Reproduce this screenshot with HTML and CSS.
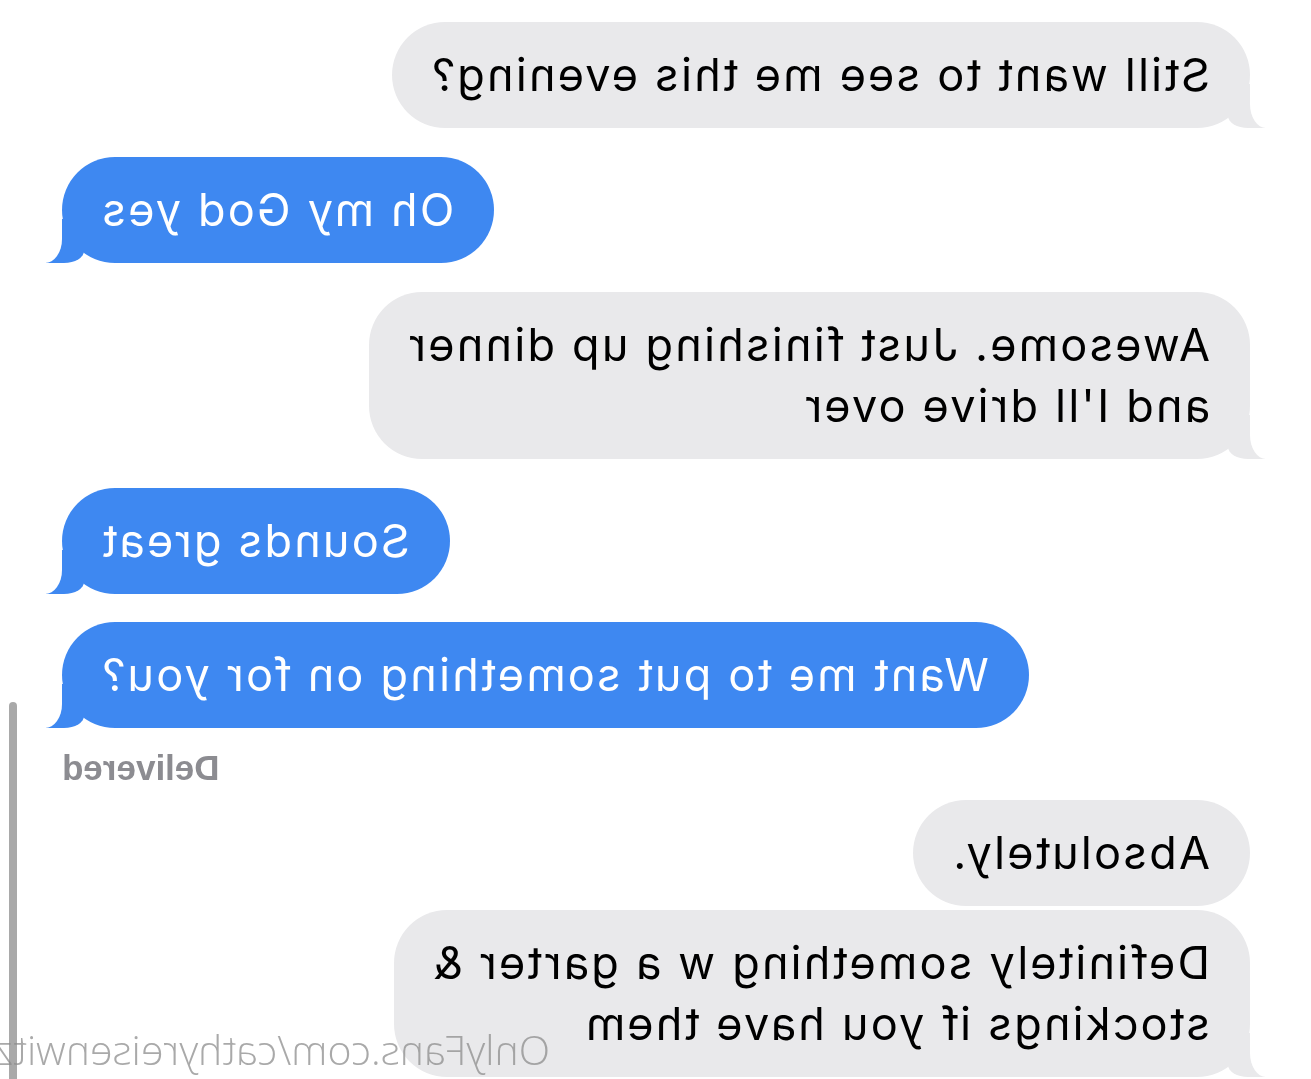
FILE: index.html
```html
<!DOCTYPE html>
<html lang="en">
  <head>
    <meta charset="UTF-8" />
    <meta name="viewport" content="width=device-width, initial-scale=1.0" />
    <title>Messages</title>
    <link rel="stylesheet" href="styles.css">
  </head>
  <body>
    <!-- the whole capture is shown mirrored, so the thread is laid out normally and flipped -->
    <div class="screen">
      <div class="thread">
        <div class="bubble them tail">Still want to see me this evening?</div>
        <div class="bubble me tail">Oh my God yes</div>
        <div class="bubble them tail">Awesome. Just finishing up dinner<br>and I'll drive over</div>
        <div class="bubble me tail">Sounds great</div>
        <div class="bubble me tail next">Want me to put something on for you?</div>
        <div class="status">Delivered</div>
        <div class="bubble them first">Absolutely.</div>
        <div class="bubble them tail next-them">Definitely something w a garter &amp;<br>stockings if you have them</div>
      </div>
      <div class="scrollbar"></div>
      <div class="watermark">OnlyFans.com/cathyreisenwitz</div>
    </div>
  </body>
</html>
```

FILE: styles.css
```css
:root {
  --blue: #3e88f1;
  --gray: #e9e9eb;
  --status: #8c8c91;
  --font: "Inter", "Liberation Sans", sans-serif;
}
* {
  box-sizing: border-box;
  margin: 0;
  padding: 0;
}
html,
body {
  width: 1311px;
  height: 1079px;
  overflow: hidden;
  background: #fff;
}
body {
  font-family: var(--font);
}
.screen {
  position: relative;
  width: 1311px;
  height: 1079px;
  overflow: hidden;
  transform: scaleX(-1);
}
.thread {
  display: flex;
  flex-direction: column;
  padding: 22px 62px 0 61px;
}
.bubble {
  position: relative;
  max-width: 1000px;
  padding: 22px 38px 23px 40px;
  border-radius: 53px;
  font-size: 45px;
  line-height: 61px;
  letter-spacing: 2.2px;
  white-space: nowrap;
  margin-top: 29px;
}
.bubble:first-child {
  margin-top: 0;
}
.bubble.them {
  align-self: flex-start;
  background: var(--gray);
  color: #000;
}
.bubble.me {
  align-self: flex-end;
  background: var(--blue);
  color: #fff;
}
.bubble.next {
  margin-top: 28px;
}
.bubble.first {
  margin-top: 12px;
}
.bubble.next-them {
  margin-top: 4px;
}

/* tails */
.bubble.tail::before,
.bubble.tail::after {
  content: "";
  position: absolute;
  bottom: 0;
  height: 44px;
}
.bubble.me.tail::before {
  right: -16px;
  width: 38px;
  background: var(--blue);
  border-bottom-left-radius: 20px 12px;
}
.bubble.me.tail::after {
  right: -40px;
  width: 40px;
  background: #fff;
  border-bottom-left-radius: 17px 24px;
}
.bubble.them.tail::before {
  left: -15px;
  width: 37px;
  background: var(--gray);
  border-bottom-right-radius: 20px 12px;
}
.bubble.them.tail::after {
  left: -40px;
  width: 40px;
  background: #fff;
  border-bottom-right-radius: 16px 24px;
}

.status {
  align-self: flex-end;
  margin-top: 20px;
  font-family: "Liberation Sans", sans-serif;
  font-size: 35px;
  font-weight: bold;
  line-height: 40px;
  color: var(--status);
}

.scrollbar {
  position: absolute;
  top: 702px;
  right: 9px;
  width: 8px;
  height: 400px;
  background: #a9a9a9;
  border-radius: 4px;
}
.watermark {
  position: absolute;
  left: 761px;
  top: 1024px;
  font-family: "Open Sans", sans-serif;
  font-weight: 300;
  font-size: 41px;
  line-height: 50px;
  color: rgba(140, 140, 140, 0.75);
  white-space: nowrap;
}
```
